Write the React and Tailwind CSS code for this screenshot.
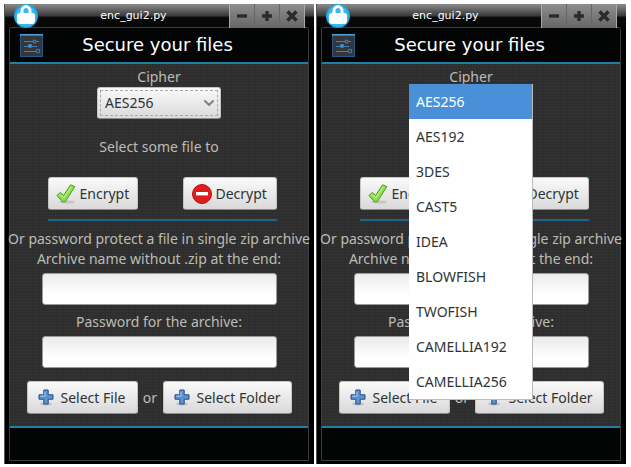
import { useId } from "react";
import { ChevronDown } from "lucide-react";

const CIPHERS = ["AES256", "AES192", "3DES", "CAST5", "IDEA", "BLOWFISH", "TWOFISH", "CAMELLIA192", "CAMELLIA256"];

function LockIcon() {
  return (
    <svg viewBox="0 0 24 24" className="size-6 shrink-0" aria-hidden="true">
      <circle cx="12" cy="12" r="12" fill="#1ba5e0" />
      <circle cx="12" cy="12" r="10.5" fill="#3bb8ec" />
      <path d="M8 10V6.8a4 4.2 0 0 1 8 0V10" fill="none" stroke="#fff" strokeWidth="3" />
      <rect x="3" y="9" width="18" height="11" rx="3" fill="#fff" />
    </svg>
  );
}

function SettingsIcon() {
  return (
    <svg viewBox="0 0 23 23" className="size-[23px] shrink-0" aria-hidden="true">
      <rect x="0.5" y="0.5" width="22" height="22" fill="#343638" stroke="#2c5686" />
      <path d="M0 0.8h23" stroke="#4a9fe0" strokeWidth="1.6" />
      <g fill="none" stroke="#3f82b8" strokeWidth="1.1">
        <path d="M4 7.5h9M16 7.5h3M4 12.5h4.5M12 12.5h5M4 17.5h12" />
        <circle cx="14.5" cy="7.5" r="1.5" />
        <circle cx="10" cy="12" r="1.6" fill="#4a8fd0" />
        <circle cx="18" cy="17" r="1.8" />
      </g>
    </svg>
  );
}

function CheckIcon() {
  return (
    <svg viewBox="0 0 20 20" className="size-5 shrink-0" aria-hidden="true">
      <ellipse cx="11" cy="18" rx="8" ry="1.6" fill="#000" opacity="0.12" />
      <path d="M1 11.6 4 8.6 7.6 11.4 14.6 0.8 18.8 2.6 9.4 17.6 6.6 17.8Z" fill="#8fe04a" stroke="#4c9a20" strokeWidth="1" strokeLinejoin="round" />
      <path d="M3 11.6 4.2 10.4 8 13.4 15.4 2.4" fill="none" stroke="#c5f59a" strokeWidth="1" />
    </svg>
  );
}

function StopIcon() {
  return (
    <svg viewBox="0 0 20 20" className="size-5 shrink-0" aria-hidden="true">
      <circle cx="10" cy="10" r="9.5" fill="#e01b1b" stroke="#c01010" />
      <rect x="4" y="8" width="12" height="3.4" fill="#fff" />
    </svg>
  );
}

function PlusIcon() {
  return (
    <svg viewBox="0 0 16 17" className="h-[17px] w-4 shrink-0" aria-hidden="true">
      <ellipse cx="8" cy="15" rx="6" ry="1.6" fill="#000" opacity="0.15" />
      <path d="M5.8 1h4.4v4.8H15v4.4h-4.8V15H5.8v-4.8H1V5.8h4.8Z" fill="#5d93cf" stroke="#214d91" strokeLinejoin="round" />
      <path d="M7 2.5v4.6H2.4M8.8 2.2h.2" fill="none" stroke="#a9c8ea" />
    </svg>
  );
}

function WindowButton({ label, children }) {
  return (
    <button type="button" aria-label={label} className="grid flex-1 place-items-center border-l border-[#666] first:border-l-0">
      <svg viewBox="0 0 12 12" className="size-3" fill="none" stroke="#2b2b2b" strokeWidth="3.4" aria-hidden="true">
        {children}
      </svg>
    </button>
  );
}

function TitleBar() {
  return (
    <div className="flex h-[23px] items-start bg-linear-to-b from-[#858585] from-5% via-[#3c3c3c] via-50% to-[#080808] to-60% pr-[9px] pl-[9px]">
      <LockIcon />
      <div className="flex-1 pt-1 text-center font-['DejaVu_Sans',sans-serif] text-[11px] leading-4 text-white">enc_gui2.py</div>
      <div className="flex h-6 w-[76px] border-x border-[#aaa] bg-linear-to-b from-[#8e8e8e] to-[#666]">
        <WindowButton label="Minimize">
          <path d="M1 6h10" />
        </WindowButton>
        <WindowButton label="Maximize">
          <path d="M1 6h10M6 1v10" />
        </WindowButton>
        <WindowButton label="Close">
          <path d="M1.5 1.5l9 9M10.5 1.5l-9 9" />
        </WindowButton>
      </div>
    </div>
  );
}

function ActionButton({ icon, children, className }) {
  return (
    <button
      type="button"
      className={`flex h-[33px] items-center rounded-[3px] border border-[#c4c4c4] border-b-[#8c8c8c] bg-linear-to-b from-[#fafafa] to-[#d9d9d9] text-sm text-[#2e3436] ${className}`}
    >
      {icon}
      {children}
    </button>
  );
}

const inputStyle =
  "h-8 w-[235px] rounded-[3px] border border-[#9a9a9a] bg-linear-to-b from-[#ebebeb] to-white to-70% px-2 text-sm text-[#2e3436] outline-none";

function CipherWindow({ open }) {
  const id = useId();
  return (
    <section className="min-w-0 flex-1 border-l border-[#555] bg-black pb-[3px]">
      <TitleBar />
      <div className="mr-[5px] ml-1 rounded-t-xs border border-[#3a3d3d]">
        <header className="flex h-[34px] items-center bg-[#030404] pl-[10px]">
          <SettingsIcon />
          <h1 className="flex-1 pr-9 text-center font-['DejaVu_Sans',sans-serif] text-lg leading-6 text-white">Secure your files</h1>
        </header>
        <main className="flex flex-col items-center border-y-2 border-[#217fa6] bg-[#2d2d2d] bg-[repeating-linear-gradient(0deg,#ffffff05_0px_1px,transparent_1px_3px),repeating-linear-gradient(90deg,#ffffff05_0px_1px,transparent_1px_3px)] pb-3 text-sm leading-5 text-[#bcbcb6]">
          <label htmlFor={`${id}-cipher`} className="pt-[3px]">
            Cipher
          </label>
          <div className="relative">
            <select
              id={`${id}-cipher`}
              defaultValue="AES256"
              className="block h-8 w-[124px] appearance-none rounded-[3px] border border-[#c4c4c4] border-b-[#8c8c8c] bg-linear-to-b from-[#fafafa] to-[#dadada] pl-[7px] text-sm text-[#2e3436] outline-1 -outline-offset-4 outline-[#aaa] outline-dashed"
            >
              {CIPHERS.map((c) => (
                <option key={c}>{c}</option>
              ))}
            </select>
            <ChevronDown className="pointer-events-none absolute top-2 right-1 size-4 text-[#808080]" strokeWidth={3} />
            {open && (
              <ul role="listbox" aria-label="Cipher" className="absolute -top-[3px] left-0 z-10 w-[124px] border-r border-b border-[#bbb] bg-white text-[#2e3436]">
                {CIPHERS.map((c) => (
                  <li
                    key={c}
                    role="option"
                    aria-selected={c === "AES256"}
                    className="flex h-[35px] items-center pl-[7px] aria-selected:bg-[#4a90d9] aria-selected:text-white"
                  >
                    {c}
                  </li>
                ))}
              </ul>
            )}
          </div>
          <p className="mt-[18px]">Select some file to</p>
          <div className="mt-5 w-[235px] pl-[6px]">
            <div className="flex justify-between border-b-2 border-[#16698c] pb-[9px]">
              <ActionButton icon={<CheckIcon />} className="w-[90px] gap-1 pl-[7px]">
                Encrypt
              </ActionButton>
              <ActionButton icon={<StopIcon />} className="w-[94px] gap-1 pl-2">
                Decrypt
              </ActionButton>
            </div>
          </div>
          <p className="mt-2 whitespace-nowrap">Or password protect a file in single zip archive</p>
          <label htmlFor={`${id}-name`} className="whitespace-nowrap">
            Archive name without .zip at the end:
          </label>
          <input id={`${id}-name`} type="text" className={`mt-1 ${inputStyle}`} />
          <label htmlFor={`${id}-password`} className="mt-[7px]">
            Password for the archive:
          </label>
          <input id={`${id}-password`} type="password" className={`mt-1 ${inputStyle}`} />
          <div className="mt-[13px] flex items-center">
            <ActionButton icon={<PlusIcon />} className="w-[111px] gap-[7px] pl-[10px]">
              Select File
            </ActionButton>
            <span className="w-[25px] text-center">or</span>
            <ActionButton icon={<PlusIcon />} className="w-[129px] gap-[7px] pl-[10px]">
              Select Folder
            </ActionButton>
          </div>
        </main>
        <footer className="h-8 bg-[#030404]" />
      </div>
    </section>
  );
}

export default function App() {
  return (
    <div className="flex gap-[2px] bg-white pt-1 pr-[5px] pl-1 font-['Noto_Sans',sans-serif]">
      <CipherWindow />
      <CipherWindow open />
    </div>
  );
}
